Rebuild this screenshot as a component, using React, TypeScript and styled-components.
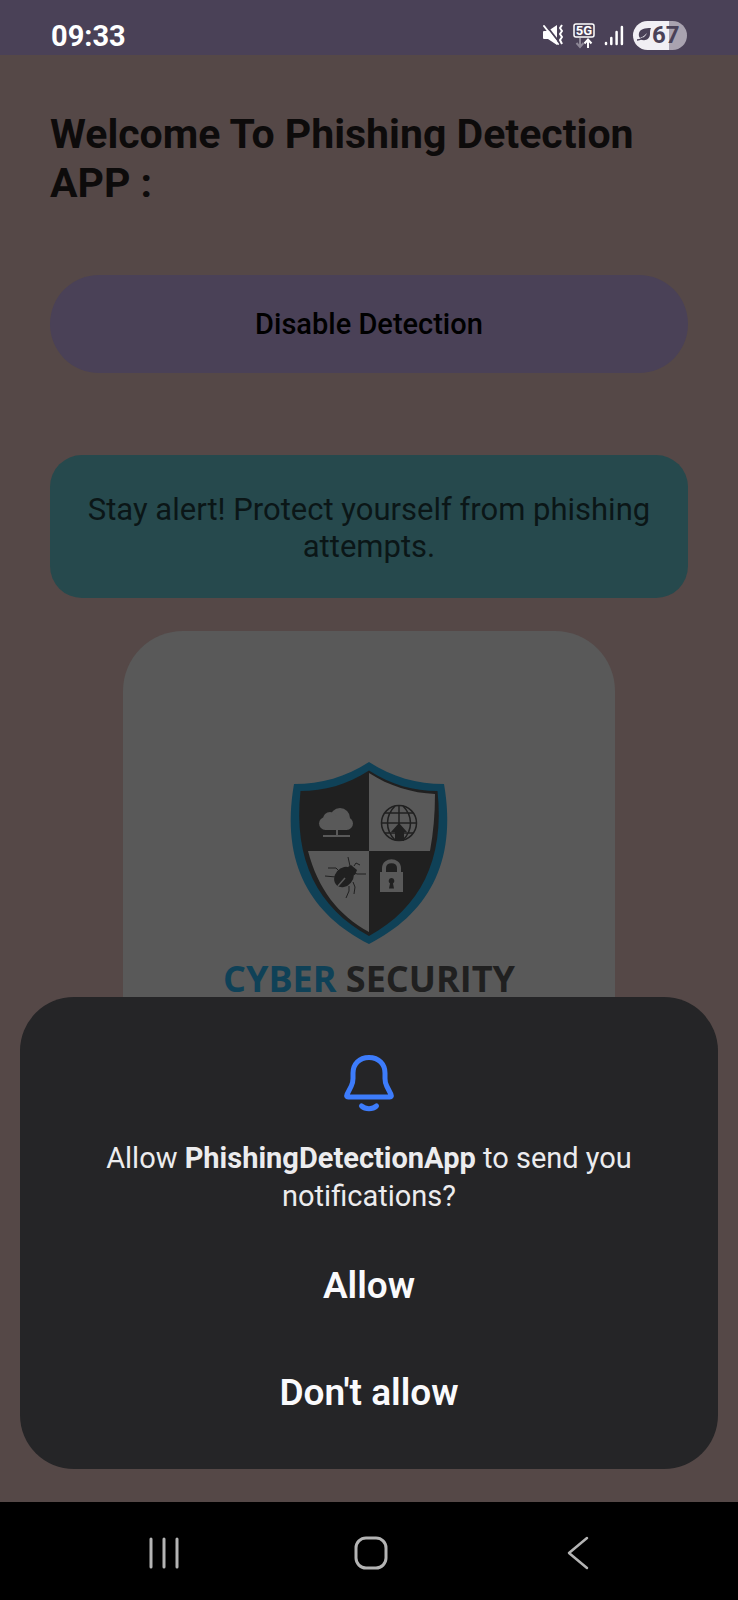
import React from 'react';
import styled, { createGlobalStyle } from 'styled-components';

const GlobalStyle = createGlobalStyle`
  *, *::before, *::after { box-sizing: border-box; }
  body { margin: 0; background: #554847; font-family: Roboto, sans-serif; }
  h1, p { margin: 0; }
  button { border: 0; margin: 0; padding: 0; background: none; font: inherit; color: inherit; cursor: pointer; }
  svg { display: block; overflow: visible; }
`;

const Screen = styled.div`
  position: relative;
  display: flex;
  flex-direction: column;
  min-height: 100vh;
  background: #554847;
`;

const StatusBar = styled.header`
  display: flex;
  justify-content: space-between;
  align-items: flex-end;
  height: 55px;
  padding: 0 51px 3px;
  background: #4a4157;
`;

const Clock = styled.time`
  font-size: 29px;
  line-height: 32px;
  font-weight: 700;
  color: #fff;
`;

const StatusIcons = styled.div`
  display: flex;
  align-items: center;
  gap: 9px;
  height: 34px;
`;

const Battery = styled.div`
  display: flex;
  align-items: center;
  width: 54px;
  height: 29px;
  padding-left: 4px;
  border-radius: 15px;
  background: linear-gradient(90deg, #f1eff4 67%, #a9a3b0 67%);
  color: #4a4157;
  font-size: 24px;
  line-height: 29px;
  font-weight: 700;
`;

const Content = styled.main`
  flex: 1 0 0;
  min-height: 0;
  overflow: hidden;
  display: flex;
  flex-direction: column;
  padding: 55px 50px 0;
`;

const Title = styled.h1`
  font-size: 41px;
  line-height: 49px;
  font-weight: 700;
  color: #0d0b0b;
`;

const DetectionButton = styled.button`
  height: 98px;
  flex-shrink: 0;
  margin-top: 67px;
  border-radius: 49px;
  background: #4a4157;
  color: #000;
  font-size: 29px;
  line-height: 32px;
  font-weight: 500;
`;

const Alert = styled.p`
  margin-top: 82px;
  padding: 36px 32px 33px;
  border-radius: 32px;
  background: #26494d;
  color: #0b1617;
  font-size: 31px;
  line-height: 37px;
  text-align: center;
`;

const LogoCard = styled.section`
  display: flex;
  flex-direction: column;
  align-items: center;
  align-self: center;
  width: 77%;
  min-height: 492px;
  margin-top: 33px;
  padding-top: 130px;
  border-radius: 60px;
  background: #595959;
`;

const Brand = styled.p`
  margin-top: 10px;
  font-family: 'Open Sans', sans-serif;
  font-size: 36px;
  line-height: 48px;
  font-weight: 700;
  color: #202020;
`;

const BrandAccent = styled.span`
  color: #0f4157;
`;

const Sheet = styled.section`
  position: absolute;
  left: 20px;
  right: 20px;
  bottom: 131px;
  display: flex;
  flex-direction: column;
  align-items: center;
  padding: 58px 64px 23px;
  border-radius: 54px;
  background: #252527;
  color: #fafafc;
`;

const Question = styled.p`
  margin-top: 27px;
  font-size: 29px;
  line-height: 38px;
  text-align: center;
  color: #ececee;
`;

const SheetButton = styled.button`
  width: 100%;
  height: 107px;
  font-size: 37px;
  line-height: 48px;
  font-weight: 600;
`;

const Actions = styled.div`
  width: 100%;
  margin-top: 17px;
`;

const NavBar = styled.nav`
  display: flex;
  justify-content: space-around;
  align-items: center;
  height: 98px;
  padding: 4px 57px 0 61px;
  background: #000;
`;

const NavButton = styled.button`
  display: flex;
  justify-content: center;
  align-items: center;
  width: 64px;
  height: 64px;
`;

const MutedIcon = () => (
  <svg width="22" height="22" viewBox="0 0 22 22" aria-hidden="true">
    <path d="M2 7h4l9-6v20l-9-6H2q-1 0-1-1V8q0-1 1-1z" fill="#fff" />
    <path d="M3 0l14 18" stroke="#4a4157" strokeWidth="2" />
    <path d="M2 2l14 18" stroke="#fff" strokeWidth="2" strokeLinecap="round" />
    <path d="M20 1l-2 3 2 3-2 3 2 3-2 3 2 4" fill="none" stroke="#fff" strokeWidth="2" strokeLinejoin="round" />
  </svg>
);

const NetworkIcon = () => (
  <svg width="22" height="25" viewBox="0 0 22 25" aria-hidden="true">
    <rect x="1" y="1" width="20" height="13" rx="2" fill="none" stroke="#fff" strokeWidth="1.500" />
    <text x="11" y="12" textAnchor="middle" fontFamily="Roboto, sans-serif" fontSize="13" fontWeight="700" fill="#fff">5G</text>
    <path d="M7 15v8M3.500 20L7 24l3.500-4" fill="none" stroke="#8d8796" strokeWidth="2" />
    <path d="M15 25v-8M11.500 20.500L15 16.500l3.500 4" fill="none" stroke="#fff" strokeWidth="2" />
  </svg>
);

const SignalIcon = () => (
  <svg width="20" height="21" viewBox="0 0 20 21" aria-hidden="true">
    <path d="M2 18v1M7.300 13v6M12.600 7v12M17.900 2v17" stroke="#fff" strokeWidth="2.500" strokeLinecap="round" />
  </svg>
);

const LeafIcon = () => (
  <svg width="15" height="14" viewBox="0 0 15 14" aria-hidden="true">
    <path d="M14 0C8 0 3 1 2 5c-.5 2 0 4 1 5 3-1 5-3 7-5-1 3-4 5-7 6 5 3 10 0 10-5 0-2 0-4 1-6z" fill="#4a4157" />
    <path d="M0 12c3 0 4-1 6-2" stroke="#4a4157" strokeWidth="1.500" fill="none" />
  </svg>
);

const BellIcon = () => (
  <svg width="50" height="57" viewBox="0 0 50 57" aria-hidden="true" fill="none" stroke="#3d7cfb" strokeWidth="5" strokeLinecap="round" strokeLinejoin="round">
    <path d="M25 2.500C15 2.500 9 9.500 9 18v5.500c0 3-.5 5-1.700 7.500L3 39.500c-.7 1.600-.2 2.500 1.200 2.500h41.600c1.400 0 1.900-.9 1.200-2.500L42.700 31c-1.200-2.500-1.700-4.500-1.700-7.500V18C41 9.500 35 2.500 25 2.500z" />
    <path d="M17.500 51c4 3.500 11 3.500 15 0" />
  </svg>
);

const ShieldLogo = () => (
  <svg width="154" height="184" viewBox="0 0 154 184" role="img" aria-label="Cyber security shield">
    <path d="M77 1C54 16 29 23 2 23C-12 104 20 154 77 183C134 154 166 104 152 23C125 23 100 16 77 1z" fill="#0f4157" />
    <path d="M77 9.500C55 24 32 30 8.500 30C1 99 26 147 77 175C128 147 153 99 145.500 30C122 30 99 24 77 9.500z" fill="#202020" />
    <path d="M77 12C97 25 120 32 143 33Q143 63 138 90H77zM16 90H77V171C46 154 26 128 16 90z" fill="#595959" />
    <g fill="#595959">
      <circle cx="48" cy="57" r="10" />
      <circle cx="38" cy="58" r="7" />
      <rect x="27" y="56" width="34" height="13" rx="6.500" />
      <path d="M44 68h2v6h12v2H31v-2h13z" />
    </g>
    <g fill="none" stroke="#202020" strokeWidth="1.500">
      <circle cx="107" cy="62" r="17.500" />
      <path d="M107 44v20M90 62h35M93 52h28M93 72h28M103 45c-10 10-10 24 0 34M111 45c10 10 10 24 0 34" />
    </g>
    <path d="M107 62l8 9h-3v9h-9v-9h-4z" fill="#202020" />
    <ellipse cx="52" cy="116" rx="9" ry="11" fill="#202020" transform="rotate(40 52 116)" />
    <path d="M56 106l3-2 6 5-2 5-5-1z" fill="#202020" />
    <path d="M46 125l7-8" stroke="#595959" strokeWidth="1.500" />
    <path d="M47 110l-3-3-8 0M44 116l-11-1M58 105l-2-9M63 112l2 1 9 0M62 105l2-3 4 2M61 121l2 5-1 7M57 125v5l-3 7" fill="none" stroke="#202020" strokeWidth="1" />
    <path d="M92 112v-5c0-9 15-9 15 0v5" fill="none" stroke="#595959" strokeWidth="4" />
    <rect x="88" y="111" width="23" height="20" fill="#595959" />
    <path d="M99.500 117a3 3 0 0 1 1.500 5.500l1 5h-5l1-5a3 3 0 0 1 1.500-5.500z" fill="#202020" />
  </svg>
);

export default function App() {
  return (
    <Screen>
      <GlobalStyle />
      <StatusBar>
        <Clock>09:33</Clock>
        <StatusIcons>
          <MutedIcon />
          <NetworkIcon />
          <SignalIcon />
          <Battery><LeafIcon />67</Battery>
        </StatusIcons>
      </StatusBar>
      <Content>
        <Title>Welcome To Phishing Detection APP :</Title>
        <DetectionButton type="button">Disable Detection</DetectionButton>
        <Alert>Stay alert! Protect yourself from phishing attempts.</Alert>
        <LogoCard>
          <ShieldLogo />
          <Brand><BrandAccent>CYBER</BrandAccent> SECURITY</Brand>
        </LogoCard>
      </Content>
      <Sheet role="dialog" aria-labelledby="permission-question">
        <BellIcon />
        <Question id="permission-question">
          Allow <b>PhishingDetectionApp</b> to send you notifications?
        </Question>
        <Actions>
          <SheetButton type="button">Allow</SheetButton>
          <SheetButton type="button">Don't allow</SheetButton>
        </Actions>
      </Sheet>
      <NavBar>
        <NavButton type="button" aria-label="Recent apps">
          <svg width="32" height="32" viewBox="0 0 32 32" stroke="#b4b4b4" strokeWidth="3" strokeLinecap="round">
            <path d="M3 2v28M16 2v28M29 2v28" />
          </svg>
        </NavButton>
        <NavButton type="button" aria-label="Home">
          <svg width="34" height="34" viewBox="0 0 34 34" fill="none" stroke="#b4b4b4" strokeWidth="3">
            <rect x="2" y="2" width="30" height="30" rx="10" />
          </svg>
        </NavButton>
        <NavButton type="button" aria-label="Back">
          <svg width="22" height="34" viewBox="0 0 22 34" fill="none" stroke="#b4b4b4" strokeWidth="2.500" strokeLinecap="round" strokeLinejoin="round">
            <path d="M20 2L2 17l18 15" />
          </svg>
        </NavButton>
      </NavBar>
    </Screen>
  );
}
